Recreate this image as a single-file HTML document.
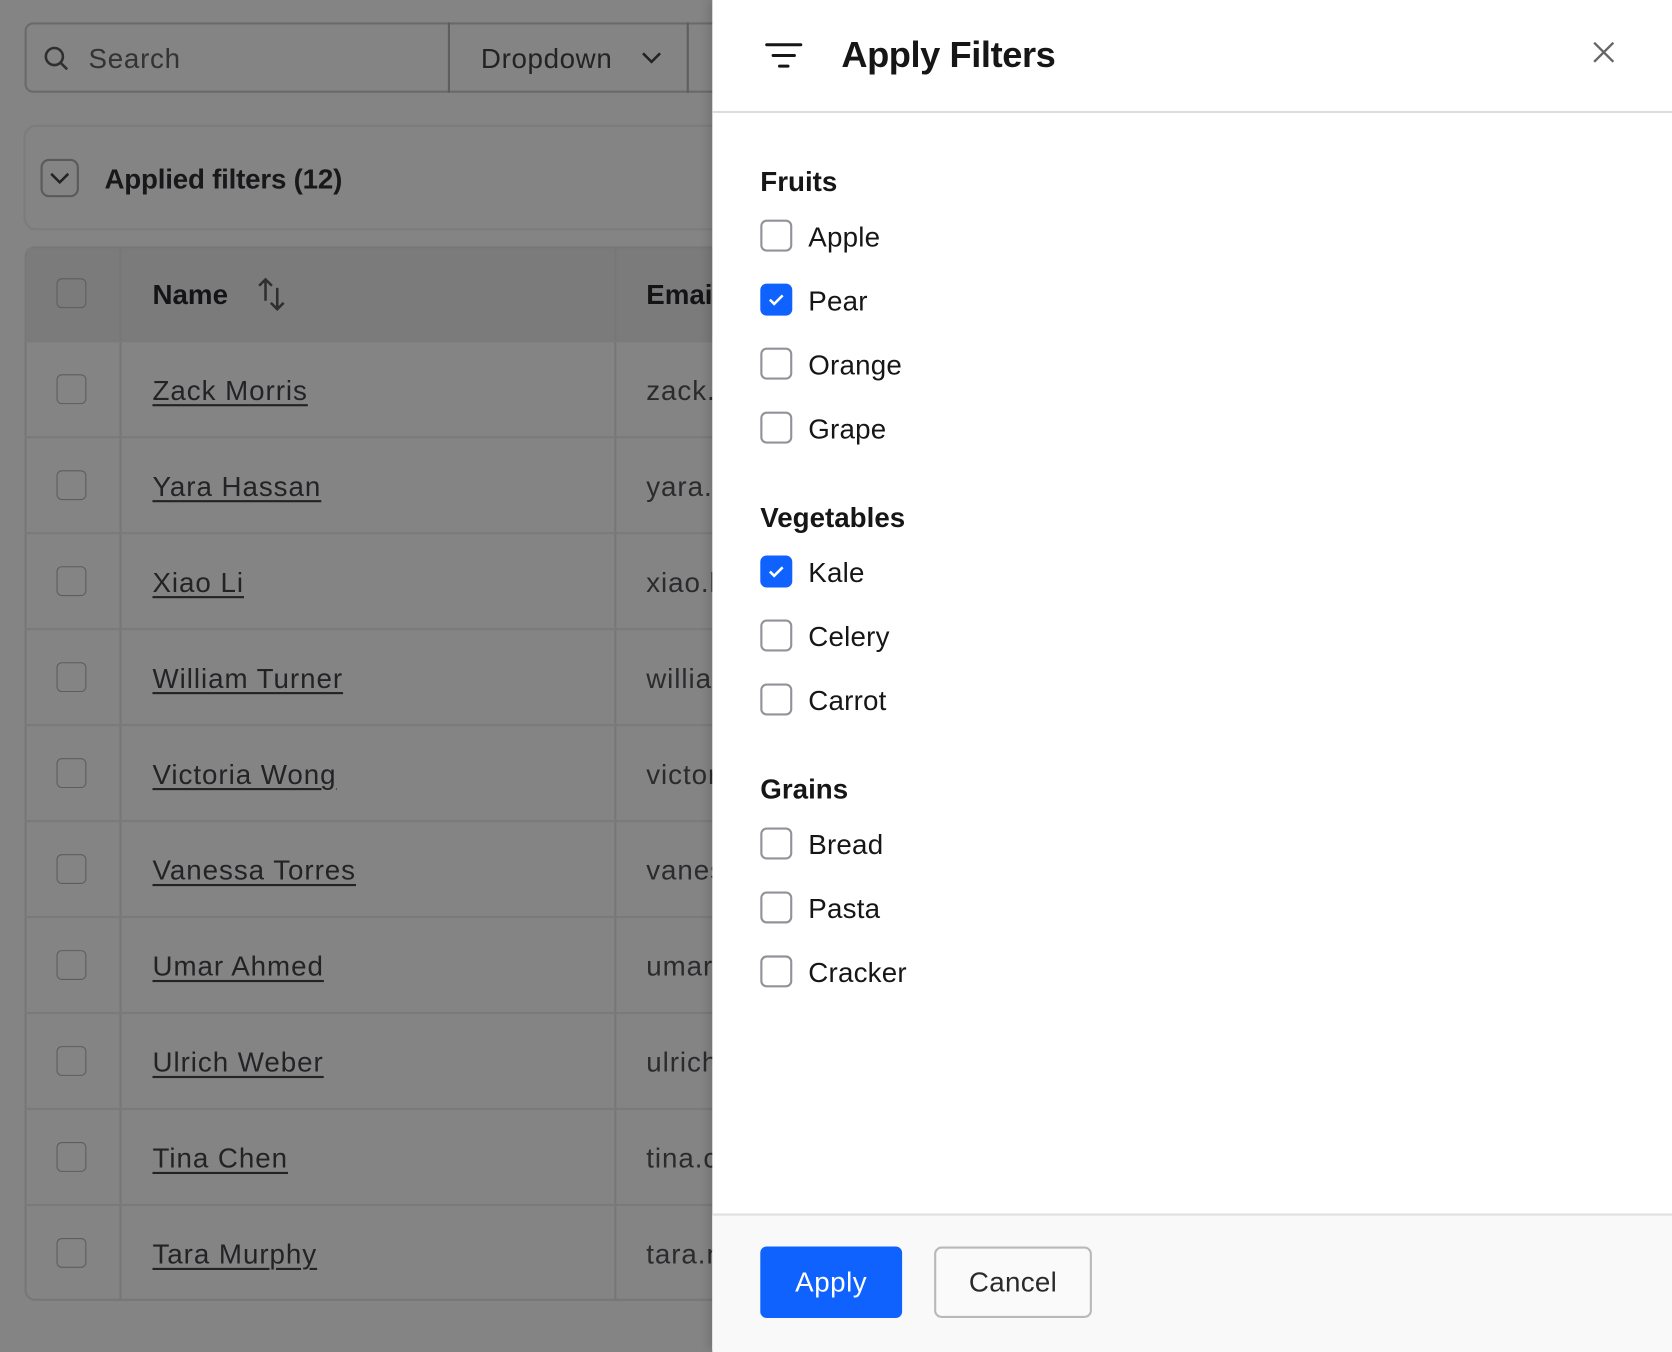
<!DOCTYPE html>
<html><head><meta charset="utf-8"><style>
html,body{margin:0;padding:0;width:1672px;height:1350px;overflow:hidden;background:#848484;}
#w{position:absolute;left:0;top:0;width:1568px;height:1266px;transform:scale(1.06633);transform-origin:0 0;font-family:"Liberation Sans",sans-serif;color:#1e1f22;}
.a{position:absolute;}
.cb{position:absolute;width:28px;height:28px;border:1.5px solid #5d5d60;border-radius:5px;box-sizing:border-box;}
.nm{position:absolute;left:143px;font-size:26px;letter-spacing:0.9px;text-decoration:underline;text-underline-offset:4px;text-decoration-thickness:2px;color:#232326;}
.em{position:absolute;left:606px;font-size:26px;letter-spacing:0.9px;color:#2b2b2e;}
.hl{position:absolute;left:23px;width:660px;height:2px;background:#7a7a7a;}
.pcb{position:absolute;left:713px;width:30px;height:30px;border:2px solid #909399;border-radius:6px;box-sizing:border-box;background:#fff;}
.pcb.on{background:#0f62fe;border-color:#0f62fe;}
.pl{position:absolute;left:758px;font-size:26px;letter-spacing:0.2px;color:#161616;}
.ph{position:absolute;left:713px;font-size:26px;font-weight:bold;color:#161616;}
</style></head><body><div id="w">
<div class="a" style="left:23px;top:21px;width:700px;height:66px;border:2px solid #6a6a6d;border-radius:8px;box-sizing:border-box;"></div>
<div class="a" style="left:420px;top:21px;width:2px;height:66px;background:#5e5e60;"></div>
<div class="a" style="left:644px;top:21px;width:2px;height:66px;background:#5e5e60;"></div>
<svg class="a" style="left:38px;top:40px" width="30" height="30" viewBox="0 0 30 30"><circle cx="13" cy="13" r="8" fill="none" stroke="#2f2f32" stroke-width="2.4"/><line x1="19" y1="19" x2="25" y2="25" stroke="#2f2f32" stroke-width="2.4"/></svg>
<div class="a" style="left:83px;top:40px;font-size:26px;letter-spacing:0.7px;color:#333336;">Search</div>
<div class="a" style="left:451px;top:40px;font-size:26px;letter-spacing:0.6px;color:#232326;">Dropdown</div>
<svg class="a" style="left:600px;top:44px" width="22" height="20"><path d="M3 6 L11 14 L19 6" fill="none" stroke="#232326" stroke-width="2.4"/></svg>
<div class="a" style="left:22px;top:117px;width:700px;height:99px;border:2px solid #7c7c7e;border-radius:12px;box-sizing:border-box;"></div>
<div class="a" style="left:38px;top:149px;width:36px;height:36px;border:2px solid #5a5a5d;border-radius:8px;box-sizing:border-box;"></div>
<svg class="a" style="left:45px;top:158px" width="22" height="18"><path d="M3 5 L11 13 L19 5" fill="none" stroke="#232326" stroke-width="2.4"/></svg>
<div class="a" style="left:98px;top:153px;font-size:26px;font-weight:bold;letter-spacing:-0.2px;color:#18181a;">Applied filters (12)</div>
<div class="a" style="left:23px;top:231px;width:700px;height:989px;border:2px solid #777;border-radius:10px;box-sizing:border-box;"></div>
<div class="a" style="left:25px;top:233px;width:660px;height:86px;background:#7b7b7b;"></div>
<div class="a" style="left:112px;top:231px;width:2px;height:989px;background:#777;"></div>
<div class="a" style="left:576px;top:231px;width:2px;height:989px;background:#777;"></div>
<div class="hl" style="top:319px"></div><div class="hl" style="top:409px"></div><div class="hl" style="top:499px"></div><div class="hl" style="top:589px"></div><div class="hl" style="top:679px"></div><div class="hl" style="top:769px"></div><div class="hl" style="top:859px"></div><div class="hl" style="top:949px"></div><div class="hl" style="top:1039px"></div><div class="hl" style="top:1129px"></div>
<div class="cb" style="left:53px;top:261px"></div>
<div class="a" style="left:143px;top:261px;font-size:26px;font-weight:bold;color:#141416;">Name</div>
<svg class="a" style="left:240px;top:258px" width="30" height="36"><path d="M9 24 V4 M3 10 L9 4 L15 10" fill="none" stroke="#2f2f32" stroke-width="2.4"/><path d="M20 12 V32 M14 26 L20 32 L26 26" fill="none" stroke="#2f2f32" stroke-width="2.4"/></svg>
<div class="a" style="left:606px;top:261px;font-size:26px;font-weight:bold;color:#141416;">Email</div>
<div class="cb" style="left:53px;top:351px"></div><div class="nm" style="top:351px">Zack Morris</div><div class="em" style="top:351px">zack.m</div>
<div class="cb" style="left:53px;top:441px"></div><div class="nm" style="top:441px">Yara Hassan</div><div class="em" style="top:441px">yara.h</div>
<div class="cb" style="left:53px;top:531px"></div><div class="nm" style="top:531px">Xiao Li</div><div class="em" style="top:531px">xiao.li</div>
<div class="cb" style="left:53px;top:621px"></div><div class="nm" style="top:621px">William Turner</div><div class="em" style="top:621px">william</div>
<div class="cb" style="left:53px;top:711px"></div><div class="nm" style="top:711px">Victoria Wong</div><div class="em" style="top:711px">victoria</div>
<div class="cb" style="left:53px;top:801px"></div><div class="nm" style="top:801px">Vanessa Torres</div><div class="em" style="top:801px">vanessa</div>
<div class="cb" style="left:53px;top:891px"></div><div class="nm" style="top:891px">Umar Ahmed</div><div class="em" style="top:891px">umar.a</div>
<div class="cb" style="left:53px;top:981px"></div><div class="nm" style="top:981px">Ulrich Weber</div><div class="em" style="top:981px">ulrich.w</div>
<div class="cb" style="left:53px;top:1071px"></div><div class="nm" style="top:1071px">Tina Chen</div><div class="em" style="top:1071px">tina.ch</div>
<div class="cb" style="left:53px;top:1161px"></div><div class="nm" style="top:1161px">Tara Murphy</div><div class="em" style="top:1161px">tara.mu</div>
<div class="a" style="left:668px;top:0;width:900px;height:1266px;background:#fff;box-shadow:-4px 0 8px rgba(0,0,0,0.12);"></div>
<div class="a" style="left:668px;top:104px;width:900px;height:2px;background:#dcdce0;"></div>
<svg class="a" style="left:716px;top:38px" width="40" height="28"><path d="M3 4 H35 M9 14 H29 M15 24 H23" stroke="#161616" stroke-width="2.8" stroke-linecap="round"/></svg>
<div class="a" style="left:789px;top:33px;font-size:34px;font-weight:bold;letter-spacing:-0.4px;color:#161616;">Apply Filters</div>
<svg class="a" style="left:1492px;top:37px" width="24" height="24"><path d="M3 3 L21 21 M21 3 L3 21" stroke="#666" stroke-width="2.2"/></svg>
<div class="ph" style="top:155px">Fruits</div>
<div class="pcb" style="top:206px"></div><div class="pl" style="top:207px">Apple</div>
<div class="pcb on" style="top:266px"><svg width="26" height="26" style="position:absolute;left:0;top:0"><path d="M7 13 L11 17 L19 9" fill="none" stroke="#fff" stroke-width="2.4"/></svg></div><div class="pl" style="top:267px">Pear</div>
<div class="pcb" style="top:326px"></div><div class="pl" style="top:327px">Orange</div>
<div class="pcb" style="top:386px"></div><div class="pl" style="top:387px">Grape</div>
<div class="ph" style="top:470px">Vegetables</div>
<div class="pcb on" style="top:521px"><svg width="26" height="26" style="position:absolute;left:0;top:0"><path d="M7 13 L11 17 L19 9" fill="none" stroke="#fff" stroke-width="2.4"/></svg></div><div class="pl" style="top:522px">Kale</div>
<div class="pcb" style="top:581px"></div><div class="pl" style="top:582px">Celery</div>
<div class="pcb" style="top:641px"></div><div class="pl" style="top:642px">Carrot</div>
<div class="ph" style="top:725px">Grains</div>
<div class="pcb" style="top:776px"></div><div class="pl" style="top:777px">Bread</div>
<div class="pcb" style="top:836px"></div><div class="pl" style="top:837px">Pasta</div>
<div class="pcb" style="top:896px"></div><div class="pl" style="top:897px">Cracker</div>
<div class="a" style="left:668px;top:1138px;width:900px;height:128px;background:#f9f9f9;border-top:2px solid #e0e0e3;"></div>
<div class="a" style="left:713px;top:1169px;width:133px;height:67px;background:#0f62fe;border-radius:6px;color:#fff;font-size:26px;line-height:67px;text-align:center;letter-spacing:0.5px;">Apply</div>
<div class="a" style="left:876px;top:1169px;width:148px;height:67px;border:2px solid #b9b9bb;border-radius:7px;box-sizing:border-box;color:#2a2a2c;font-size:26px;line-height:63px;text-align:center;background:#fafafa;letter-spacing:0.3px;">Cancel</div>
</div></body></html>
